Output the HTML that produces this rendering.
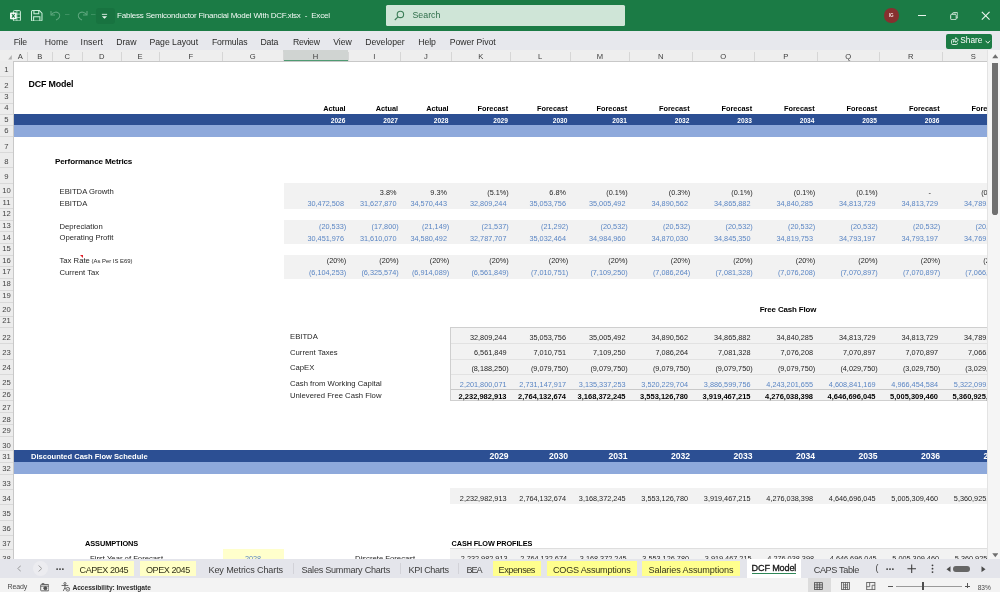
<!DOCTYPE html>
<html lang="en"><head><meta charset="utf-8"><title>Fabless Semiconductor Financial Model With DCF.xlsx - Excel</title>
<style>
html,body{margin:0;padding:0;}
body{width:1000px;height:592px;overflow:hidden;position:relative;background:#fff;font-family:"Liberation Sans",sans-serif;color:#1a1a1a;}
div,span.t,svg.a{position:absolute;}
.t{white-space:nowrap;line-height:1.15;font-size:7.6px;color:#262626;}
.b{font-weight:bold;color:#000;}
.w{color:#fff;}
.blue{color:#5b86c4;}
.ch{font-size:7.6px;color:#3c3c3c;}
.rh{color:#444;}
#titlebar{left:0;top:0;width:1000px;height:30.8px;background:#1b7b45;}
#ribbon{left:0;top:30.8px;width:1000px;height:19.4px;background:#e7e8ed;}
#ribbon .t{font-size:8.7px;color:#2b2b2b;top:6.4px;}
#tabs{left:0;top:558.8px;width:1000px;height:19.4px;background:#e4e5eb;}
#tabs .tab{top:2px;height:14.8px;}
#status{left:0;top:578.2px;width:1000px;height:13.8px;background:#f3f3f3;}
#status .t{font-size:7.2px;color:#4a4a4a;top:5.3px;}
</style></head><body>
<div id="aa" style="left:0;top:0;width:1000px;height:592px;will-change:transform;">
<div id="titlebar">
<!-- excel logo -->
<svg class="a" style="left:9.8px;top:9.6px" width="11" height="11.6" viewBox="0 0 11 11.6"><rect x="3.4" y="0.6" width="7" height="10.4" rx="1" fill="none" stroke="#d4f0df" stroke-width="1"/><path d="M6.9 0.6 V11 M3.4 4.1 H10.4 M3.4 7.5 H10.4" stroke="#bfe6cf" stroke-width="0.8" fill="none"/><rect x="0" y="2.6" width="6.6" height="6.6" rx="0.9" fill="#f4fbf6"/><path d="M1.9 4.2 L4.7 7.6 M4.7 4.2 L1.9 7.6" stroke="#1b7b45" stroke-width="1.05"/></svg>
<!-- save -->
<svg class="a" style="left:31px;top:9.5px" width="11.5" height="11.5" viewBox="0 0 11 11" fill="none" stroke="#c9efd9" stroke-width="1"><path d="M1.5 0.5 H8 L10.5 3 V9.5 a1 1 0 0 1 -1 1 H1.5 a1 1 0 0 1 -1 -1 V1.5 a1 1 0 0 1 1 -1 Z"/><path d="M2.8 0.5 V3.6 H7.4 V0.5"/><path d="M2.5 10.5 V6.5 H8.5 V10.5"/></svg>
<!-- undo -->
<svg class="a" style="left:50px;top:10px" width="12" height="11" viewBox="0 0 12 11" fill="none" stroke="#5fa77f" stroke-width="1.1"><path d="M1 1 V5 H5"/><path d="M1.3 4.8 C3 2 7 1.2 9 3.5 C11 6 9 9 6 10"/></svg>
<span class="t" style="left:65px;top:9px;font-size:8px;color:#5fa77f;">&#8211;</span>
<!-- redo -->
<svg class="a" style="left:76px;top:10px" width="12" height="11" viewBox="0 0 12 11" fill="none" stroke="#5fa77f" stroke-width="1.1"><path d="M11 1 V5 H7"/><path d="M10.7 4.8 C9 2 5 1.2 3 3.5 C1 6 3 9 6 10"/></svg>
<span class="t" style="left:91px;top:9px;font-size:8px;color:#5fa77f;">&#8211;</span>
<!-- customize qat -->
<div style="left:96px;top:8px;width:19px;height:16px;border-radius:3px;background:#187340;"></div>
<svg class="a" style="left:100.5px;top:13px" width="7" height="7" viewBox="0 0 8 8"><rect x="1" y="1" width="6" height="1" fill="#eaf5ee"/><polygon points="1,3.6 7,3.6 4,6.6" fill="#eaf5ee"/></svg>
<span class="t" style="left:117px;top:11.2px;font-size:8px;letter-spacing:-0.2px;color:#f4faf6;">Fabless Semiconductor Financial Model With DCF.xlsx &nbsp;-&nbsp; Excel</span>
<!-- search -->
<div style="left:386px;top:5px;width:239px;height:20.5px;background:#cfe5d7;border-radius:1.5px;"></div>
<svg class="a" style="left:394px;top:9.5px" width="11" height="11" viewBox="0 0 11 11" fill="none" stroke="#3c7d57" stroke-width="1.1"><circle cx="6.4" cy="4.4" r="3.2"/><path d="M4 6.8 L0.8 10"/></svg>
<span class="t" style="left:412.5px;top:9.9px;font-size:8.8px;color:#2f6e4a;">Search</span>
<!-- avatar -->
<div style="left:884px;top:8.3px;width:14.5px;height:14.5px;border-radius:50%;background:#86302f;"></div>
<span class="t" style="left:884px;width:14.5px;text-align:center;top:12.8px;font-size:4.6px;color:#f6dada;font-weight:bold;">IG</span>
<!-- window controls -->
<div style="left:918.3px;top:14.6px;width:8px;height:1.2px;background:#e9f4ed;"></div>
<svg class="a" style="left:949.5px;top:11.6px" width="8.6" height="8.6" viewBox="0 0 10 10" fill="none" stroke="#e9f4ed" stroke-width="1.1"><rect x="0.8" y="2.6" width="6.4" height="6.4" rx="1.2"/><path d="M3 2.3 V1.8 a1 1 0 0 1 1 -1 H8.2 a1 1 0 0 1 1 1 V6 a1 1 0 0 1 -1 1 H7.6"/></svg>
<svg class="a" style="left:980.5px;top:10.7px" width="9.4" height="9.4" viewBox="0 0 9 9" fill="none" stroke="#e9f4ed" stroke-width="1.1"><path d="M0.8 0.8 L8.2 8.2 M8.2 0.8 L0.8 8.2"/></svg>
</div>
<div id="ribbon">
<span class="t" style="left:13.8px;letter-spacing:-0.254px;">File</span>
<span class="t" style="left:44.7px;letter-spacing:0.049px;">Home</span>
<span class="t" style="left:80.6px;letter-spacing:0.140px;">Insert</span>
<span class="t" style="left:116.2px;letter-spacing:-0.001px;">Draw</span>
<span class="t" style="left:149.5px;letter-spacing:-0.024px;">Page Layout</span>
<span class="t" style="left:211.9px;letter-spacing:-0.083px;">Formulas</span>
<span class="t" style="left:260.4px;letter-spacing:-0.169px;">Data</span>
<span class="t" style="left:292.9px;letter-spacing:-0.288px;">Review</span>
<span class="t" style="left:333.2px;letter-spacing:-0.001px;">View</span>
<span class="t" style="left:365.2px;letter-spacing:-0.017px;">Developer</span>
<span class="t" style="left:418.2px;letter-spacing:-0.049px;">Help</span>
<span class="t" style="left:449.7px;letter-spacing:-0.038px;">Power Pivot</span>
<div style="left:946.4px;top:2.8px;width:46px;height:15px;background:#1b7b45;border-radius:2px;"></div>
<svg class="a" style="left:950.8px;top:6.4px" width="8" height="8" viewBox="0 0 8 8" fill="none" stroke="#e9f4ed" stroke-width="0.9"><path d="M3 2.6 H1.6 a1 1 0 0 0 -1 1 V6.5 a1 1 0 0 0 1 1 H5.4 a1 1 0 0 0 1 -1 V5.8"/><path d="M4.7 0.6 L7.4 3 L4.7 5.4 V4 C3.6 4 2.9 4.4 2.4 5.2 C2.5 3.4 3.4 2.2 4.7 2 Z"/></svg>
<span class="t" style="left:960.3px;top:5.6px;font-size:8.3px;color:#fff;">Share</span>
<svg class="a" style="left:985.4px;top:8.8px" width="5.6" height="4.4" viewBox="0 0 5 4" fill="none" stroke="#e9f4ed" stroke-width="0.9"><path d="M0.5 0.7 L2.5 2.9 L4.5 0.7"/></svg>
</div>
<div id="sheet" style="left:0;top:50px;width:987px;height:509px;overflow:hidden;background:#fff;">
<div id="sheetin" style="left:0;top:-50px;width:1000px;height:700px;">
<div style="left:0px;top:50px;width:987px;height:10.8px;background:#eeeeee;border-bottom:0.8px solid #c8c8c8;"></div>
<div style="left:283px;top:50px;width:65px;height:10px;background:#d0d4d2;border-bottom:1.3px solid #4f9a72;"></div>
<span class="t ch" style="left:10.2px;width:20px;top:52.8px;text-align:center;">A</span>
<div style="left:27.0px;top:51.5px;width:1px;height:9.5px;background:#d6d6d6;"></div>
<span class="t ch" style="left:29.8px;width:20px;top:52.8px;text-align:center;">B</span>
<div style="left:51.5px;top:51.5px;width:1px;height:9.5px;background:#d6d6d6;"></div>
<span class="t ch" style="left:57.2px;width:20px;top:52.8px;text-align:center;">C</span>
<div style="left:82.0px;top:51.5px;width:1px;height:9.5px;background:#d6d6d6;"></div>
<span class="t ch" style="left:91.8px;width:20px;top:52.8px;text-align:center;">D</span>
<div style="left:120.5px;top:51.5px;width:1px;height:9.5px;background:#d6d6d6;"></div>
<span class="t ch" style="left:130.0px;width:20px;top:52.8px;text-align:center;">E</span>
<div style="left:158.5px;top:51.5px;width:1px;height:9.5px;background:#d6d6d6;"></div>
<span class="t ch" style="left:180.8px;width:20px;top:52.8px;text-align:center;">F</span>
<div style="left:222.0px;top:51.5px;width:1px;height:9.5px;background:#d6d6d6;"></div>
<span class="t ch" style="left:242.8px;width:20px;top:52.8px;text-align:center;">G</span>
<div style="left:282.5px;top:51.5px;width:1px;height:9.5px;background:#d6d6d6;"></div>
<span class="t ch" style="left:305.5px;width:20px;top:52.8px;text-align:center;">H</span>
<div style="left:347.5px;top:51.5px;width:1px;height:9.5px;background:#d6d6d6;"></div>
<span class="t ch" style="left:364.2px;width:20px;top:52.8px;text-align:center;">I</span>
<div style="left:400.0px;top:51.5px;width:1px;height:9.5px;background:#d6d6d6;"></div>
<span class="t ch" style="left:415.8px;width:20px;top:52.8px;text-align:center;">J</span>
<div style="left:450.5px;top:51.5px;width:1px;height:9.5px;background:#d6d6d6;"></div>
<span class="t ch" style="left:470.8px;width:20px;top:52.8px;text-align:center;">K</span>
<div style="left:510.0px;top:51.5px;width:1px;height:9.5px;background:#d6d6d6;"></div>
<span class="t ch" style="left:530.2px;width:20px;top:52.8px;text-align:center;">L</span>
<div style="left:569.5px;top:51.5px;width:1px;height:9.5px;background:#d6d6d6;"></div>
<span class="t ch" style="left:589.8px;width:20px;top:52.8px;text-align:center;">M</span>
<div style="left:629.0px;top:51.5px;width:1px;height:9.5px;background:#d6d6d6;"></div>
<span class="t ch" style="left:650.8px;width:20px;top:52.8px;text-align:center;">N</span>
<div style="left:691.5px;top:51.5px;width:1px;height:9.5px;background:#d6d6d6;"></div>
<span class="t ch" style="left:713.2px;width:20px;top:52.8px;text-align:center;">O</span>
<div style="left:754.0px;top:51.5px;width:1px;height:9.5px;background:#d6d6d6;"></div>
<span class="t ch" style="left:775.8px;width:20px;top:52.8px;text-align:center;">P</span>
<div style="left:816.5px;top:51.5px;width:1px;height:9.5px;background:#d6d6d6;"></div>
<span class="t ch" style="left:838.2px;width:20px;top:52.8px;text-align:center;">Q</span>
<div style="left:879.0px;top:51.5px;width:1px;height:9.5px;background:#d6d6d6;"></div>
<span class="t ch" style="left:900.8px;width:20px;top:52.8px;text-align:center;">R</span>
<div style="left:941.5px;top:51.5px;width:1px;height:9.5px;background:#d6d6d6;"></div>
<span class="t ch" style="left:963.2px;width:20px;top:52.8px;text-align:center;">S</span>
<div style="left:0px;top:61.4px;width:12.7px;height:500px;background:#ececec;border-right:0.8px solid #c8c8c8;"></div>
<div style="left:0px;top:50px;width:13px;height:10.8px;background:#eeeeee;"></div>
<svg style="position:absolute;left:7.5px;top:54.8px" width="4" height="5"><polygon points="3.8,0 3.8,4.6 0.2,4.6" fill="#b0b0b0"/></svg>
<span class="t rh" style="left:0;width:13px;top:66.2px;font-size:7.7px;text-align:center;">1</span>
<div style="left:0px;top:75.5px;width:13px;height:1px;background:#d9d9d9;"></div>
<span class="t rh" style="left:0;width:13px;top:82.2px;font-size:7.7px;text-align:center;">2</span>
<div style="left:0px;top:91.5px;width:13px;height:1px;background:#d9d9d9;"></div>
<span class="t rh" style="left:0;width:13px;top:93.2px;font-size:7.7px;text-align:center;">3</span>
<div style="left:0px;top:102.5px;width:13px;height:1px;background:#d9d9d9;"></div>
<span class="t rh" style="left:0;width:13px;top:104.4px;font-size:7.7px;text-align:center;">4</span>
<div style="left:0px;top:113.7px;width:13px;height:1px;background:#d9d9d9;"></div>
<span class="t rh" style="left:0;width:13px;top:115.6px;font-size:7.7px;text-align:center;">5</span>
<div style="left:0px;top:124.9px;width:13px;height:1px;background:#d9d9d9;"></div>
<span class="t rh" style="left:0;width:13px;top:127.0px;font-size:7.7px;text-align:center;">6</span>
<div style="left:0px;top:136.3px;width:13px;height:1px;background:#d9d9d9;"></div>
<span class="t rh" style="left:0;width:13px;top:142.7px;font-size:7.7px;text-align:center;">7</span>
<div style="left:0px;top:152.0px;width:13px;height:1px;background:#d9d9d9;"></div>
<span class="t rh" style="left:0;width:13px;top:157.7px;font-size:7.7px;text-align:center;">8</span>
<div style="left:0px;top:167.0px;width:13px;height:1px;background:#d9d9d9;"></div>
<span class="t rh" style="left:0;width:13px;top:173.2px;font-size:7.7px;text-align:center;">9</span>
<div style="left:0px;top:182.5px;width:13px;height:1px;background:#d9d9d9;"></div>
<span class="t rh" style="left:0;width:13px;top:187.2px;font-size:7.7px;text-align:center;">10</span>
<div style="left:0px;top:196.5px;width:13px;height:1px;background:#d9d9d9;"></div>
<span class="t rh" style="left:0;width:13px;top:198.7px;font-size:7.7px;text-align:center;">11</span>
<div style="left:0px;top:208.0px;width:13px;height:1px;background:#d9d9d9;"></div>
<span class="t rh" style="left:0;width:13px;top:210.2px;font-size:7.7px;text-align:center;">12</span>
<div style="left:0px;top:219.5px;width:13px;height:1px;background:#d9d9d9;"></div>
<span class="t rh" style="left:0;width:13px;top:221.7px;font-size:7.7px;text-align:center;">13</span>
<div style="left:0px;top:231.0px;width:13px;height:1px;background:#d9d9d9;"></div>
<span class="t rh" style="left:0;width:13px;top:233.7px;font-size:7.7px;text-align:center;">14</span>
<div style="left:0px;top:243.0px;width:13px;height:1px;background:#d9d9d9;"></div>
<span class="t rh" style="left:0;width:13px;top:245.2px;font-size:7.7px;text-align:center;">15</span>
<div style="left:0px;top:254.5px;width:13px;height:1px;background:#d9d9d9;"></div>
<span class="t rh" style="left:0;width:13px;top:256.7px;font-size:7.7px;text-align:center;">16</span>
<div style="left:0px;top:266.0px;width:13px;height:1px;background:#d9d9d9;"></div>
<span class="t rh" style="left:0;width:13px;top:268.2px;font-size:7.7px;text-align:center;">17</span>
<div style="left:0px;top:277.5px;width:13px;height:1px;background:#d9d9d9;"></div>
<span class="t rh" style="left:0;width:13px;top:280.2px;font-size:7.7px;text-align:center;">18</span>
<div style="left:0px;top:289.5px;width:13px;height:1px;background:#d9d9d9;"></div>
<span class="t rh" style="left:0;width:13px;top:292.2px;font-size:7.7px;text-align:center;">19</span>
<div style="left:0px;top:301.5px;width:13px;height:1px;background:#d9d9d9;"></div>
<span class="t rh" style="left:0;width:13px;top:306.2px;font-size:7.7px;text-align:center;">20</span>
<div style="left:0px;top:315.5px;width:13px;height:1px;background:#d9d9d9;"></div>
<span class="t rh" style="left:0;width:13px;top:317.4px;font-size:7.7px;text-align:center;">21</span>
<div style="left:0px;top:326.7px;width:13px;height:1px;background:#d9d9d9;"></div>
<span class="t rh" style="left:0;width:13px;top:333.8px;font-size:7.7px;text-align:center;">22</span>
<div style="left:0px;top:343.1px;width:13px;height:1px;background:#d9d9d9;"></div>
<span class="t rh" style="left:0;width:13px;top:349.2px;font-size:7.7px;text-align:center;">23</span>
<div style="left:0px;top:358.5px;width:13px;height:1px;background:#d9d9d9;"></div>
<span class="t rh" style="left:0;width:13px;top:364.2px;font-size:7.7px;text-align:center;">24</span>
<div style="left:0px;top:373.5px;width:13px;height:1px;background:#d9d9d9;"></div>
<span class="t rh" style="left:0;width:13px;top:379.2px;font-size:7.7px;text-align:center;">25</span>
<div style="left:0px;top:388.5px;width:13px;height:1px;background:#d9d9d9;"></div>
<span class="t rh" style="left:0;width:13px;top:390.8px;font-size:7.7px;text-align:center;">26</span>
<div style="left:0px;top:400.1px;width:13px;height:1px;background:#d9d9d9;"></div>
<span class="t rh" style="left:0;width:13px;top:404.0px;font-size:7.7px;text-align:center;">27</span>
<div style="left:0px;top:411.5px;width:13px;height:1px;background:#d9d9d9;"></div>
<span class="t rh" style="left:0;width:13px;top:415.7px;font-size:7.7px;text-align:center;">28</span>
<div style="left:0px;top:423.5px;width:13px;height:1px;background:#d9d9d9;"></div>
<span class="t rh" style="left:0;width:13px;top:427.4px;font-size:7.7px;text-align:center;">29</span>
<div style="left:0px;top:435.5px;width:13px;height:1px;background:#d9d9d9;"></div>
<span class="t rh" style="left:0;width:13px;top:442.0px;font-size:7.7px;text-align:center;">30</span>
<div style="left:0px;top:449.5px;width:13px;height:1px;background:#d9d9d9;"></div>
<span class="t rh" style="left:0;width:13px;top:453.2px;font-size:7.7px;text-align:center;">31</span>
<div style="left:0px;top:461.5px;width:13px;height:1px;background:#d9d9d9;"></div>
<span class="t rh" style="left:0;width:13px;top:464.7px;font-size:7.7px;text-align:center;">32</span>
<div style="left:0px;top:473.5px;width:13px;height:1px;background:#d9d9d9;"></div>
<span class="t rh" style="left:0;width:13px;top:480.2px;font-size:7.7px;text-align:center;">33</span>
<div style="left:0px;top:488.5px;width:13px;height:1px;background:#d9d9d9;"></div>
<span class="t rh" style="left:0;width:13px;top:495.2px;font-size:7.7px;text-align:center;">34</span>
<div style="left:0px;top:503.5px;width:13px;height:1px;background:#d9d9d9;"></div>
<span class="t rh" style="left:0;width:13px;top:510.2px;font-size:7.7px;text-align:center;">35</span>
<div style="left:0px;top:519.5px;width:13px;height:1px;background:#d9d9d9;"></div>
<span class="t rh" style="left:0;width:13px;top:524.7px;font-size:7.7px;text-align:center;">36</span>
<div style="left:0px;top:535.0px;width:13px;height:1px;background:#d9d9d9;"></div>
<span class="t rh" style="left:0;width:13px;top:539.8px;font-size:7.7px;text-align:center;">37</span>
<div style="left:0px;top:549.1px;width:13px;height:1px;background:#d9d9d9;"></div>
<span class="t rh" style="left:0;width:13px;top:555.2px;font-size:7.7px;text-align:center;">38</span>
<div style="left:0px;top:564.5px;width:13px;height:1px;background:#d9d9d9;"></div>
<div style="left:13.5px;top:114.2px;width:1000px;height:11.200000000000003px;background:#2c4f93;"></div>
<div style="left:13.5px;top:125.4px;width:1000px;height:11.400000000000006px;background:#8ea9db;"></div>
<div style="left:13.5px;top:450px;width:1000px;height:12px;background:#2c4f93;"></div>
<div style="left:13.5px;top:462px;width:1000px;height:12px;background:#8ea9db;"></div>
<div style="left:283.5px;top:183px;width:800px;height:25.8px;background:#f2f2f2;"></div>
<div style="left:283.5px;top:220px;width:800px;height:23.5px;background:#f2f2f2;"></div>
<div style="left:283.5px;top:255px;width:800px;height:24.2px;background:#f2f2f2;"></div>
<div style="left:449.8px;top:488.2px;width:800px;height:15.8px;background:#f2f2f2;"></div>
<div style="left:449.8px;top:548.2px;width:800px;height:20px;background:#f2f2f2;border-top:1px solid #dedede;"></div>
<div style="left:450px;top:326.8px;width:800px;height:74.30000000000004px;background:#f2f2f2;border:1px solid #cfcfcf;box-sizing:border-box;"></div>
<div style="left:451px;top:343.1px;width:800px;height:1px;background:#e2e2e2;"></div>
<div style="left:451px;top:358.5px;width:800px;height:1px;background:#e2e2e2;"></div>
<div style="left:451px;top:373.5px;width:800px;height:1px;background:#e2e2e2;"></div>
<div style="left:451px;top:388.5px;width:800px;height:1px;background:#c9c9c9;"></div>
<div style="left:222.5px;top:549px;width:61px;height:12px;background:#ffffcc;"></div>
<span class="t b" style="left:28.6px;top:79.3px;font-size:8.9px;letter-spacing:-0.18px;">DCF Model</span>
<span class="t b" style="left:55px;top:156.9px;font-size:8.1px;letter-spacing:-0.15px;">Performance Metrics</span>
<span class="t b" style="right:654.4px;top:105.4px;font-size:7.35px;">Actual</span>
<span class="t b" style="right:601.9px;top:105.4px;font-size:7.35px;">Actual</span>
<span class="t b" style="right:551.4px;top:105.4px;font-size:7.35px;">Actual</span>
<span class="t b" style="right:491.9px;top:105.4px;font-size:7.35px;">Forecast</span>
<span class="t b" style="right:432.4px;top:105.4px;font-size:7.35px;">Forecast</span>
<span class="t b" style="right:372.9px;top:105.4px;font-size:7.35px;">Forecast</span>
<span class="t b" style="right:310.4px;top:105.4px;font-size:7.35px;">Forecast</span>
<span class="t b" style="right:247.9px;top:105.4px;font-size:7.35px;">Forecast</span>
<span class="t b" style="right:185.4px;top:105.4px;font-size:7.35px;">Forecast</span>
<span class="t b" style="right:122.9px;top:105.4px;font-size:7.35px;">Forecast</span>
<span class="t b" style="right:60.4px;top:105.4px;font-size:7.35px;">Forecast</span>
<span class="t b" style="right:-2.1px;top:105.4px;font-size:7.35px;">Forecast</span>
<span class="t b w" style="right:654.6px;top:117.5px;font-size:6.6px;top:117.1px;">2026</span>
<span class="t b w" style="right:602.1px;top:117.5px;font-size:6.6px;top:117.1px;">2027</span>
<span class="t b w" style="right:551.6px;top:117.5px;font-size:6.6px;top:117.1px;">2028</span>
<span class="t b w" style="right:492.1px;top:117.5px;font-size:6.6px;top:117.1px;">2029</span>
<span class="t b w" style="right:432.6px;top:117.5px;font-size:6.6px;top:117.1px;">2030</span>
<span class="t b w" style="right:373.1px;top:117.5px;font-size:6.6px;top:117.1px;">2031</span>
<span class="t b w" style="right:310.6px;top:117.5px;font-size:6.6px;top:117.1px;">2032</span>
<span class="t b w" style="right:248.1px;top:117.5px;font-size:6.6px;top:117.1px;">2033</span>
<span class="t b w" style="right:185.6px;top:117.5px;font-size:6.6px;top:117.1px;">2034</span>
<span class="t b w" style="right:123.1px;top:117.5px;font-size:6.6px;top:117.1px;">2035</span>
<span class="t b w" style="right:60.6px;top:117.5px;font-size:6.6px;top:117.1px;">2036</span>
<span class="t b w" style="right:-1.9px;top:117.5px;font-size:6.6px;top:117.1px;">2037</span>
<span class="t " style="left:59.5px;top:188.1px;font-size:7.7px;">EBITDA Growth</span>
<span class="t " style="right:603.5px;top:188.6px;font-size:7.3px;">3.8%</span>
<span class="t " style="right:553.0px;top:188.6px;font-size:7.3px;">9.3%</span>
<span class="t " style="right:491.3px;top:188.6px;font-size:7.3px;">(5.1%)</span>
<span class="t " style="right:434.0px;top:188.6px;font-size:7.3px;">6.8%</span>
<span class="t " style="right:372.3px;top:188.6px;font-size:7.3px;">(0.1%)</span>
<span class="t " style="right:309.8px;top:188.6px;font-size:7.3px;">(0.3%)</span>
<span class="t " style="right:247.3px;top:188.6px;font-size:7.3px;">(0.1%)</span>
<span class="t " style="right:184.8px;top:188.6px;font-size:7.3px;">(0.1%)</span>
<span class="t " style="right:122.3px;top:188.6px;font-size:7.3px;">(0.1%)</span>
<span class="t " style="right:69.0px;top:188.6px;font-size:7.3px;">-</span>
<span class="t " style="right:-2.7px;top:188.6px;font-size:7.3px;">(0.1%)</span>
<span class="t " style="left:59.5px;top:199.7px;font-size:7.7px;">EBITDA</span>
<span class="t blue" style="right:656.0px;top:200.2px;font-size:7.3px;">30,472,508</span>
<span class="t blue" style="right:603.5px;top:200.2px;font-size:7.3px;">31,627,870</span>
<span class="t blue" style="right:553.0px;top:200.2px;font-size:7.3px;">34,570,443</span>
<span class="t blue" style="right:493.5px;top:200.2px;font-size:7.3px;">32,809,244</span>
<span class="t blue" style="right:434.0px;top:200.2px;font-size:7.3px;">35,053,756</span>
<span class="t blue" style="right:374.5px;top:200.2px;font-size:7.3px;">35,005,492</span>
<span class="t blue" style="right:312.0px;top:200.2px;font-size:7.3px;">34,890,562</span>
<span class="t blue" style="right:249.5px;top:200.2px;font-size:7.3px;">34,865,882</span>
<span class="t blue" style="right:187.0px;top:200.2px;font-size:7.3px;">34,840,285</span>
<span class="t blue" style="right:124.5px;top:200.2px;font-size:7.3px;">34,813,729</span>
<span class="t blue" style="right:62.0px;top:200.2px;font-size:7.3px;">34,813,729</span>
<span class="t blue" style="right:-0.5px;top:200.2px;font-size:7.3px;">34,789,842</span>
<span class="t " style="left:59.5px;top:222.7px;font-size:7.7px;">Depreciation</span>
<span class="t blue" style="right:653.8px;top:223.2px;font-size:7.3px;">(20,533)</span>
<span class="t blue" style="right:601.3px;top:223.2px;font-size:7.3px;">(17,800)</span>
<span class="t blue" style="right:550.8px;top:223.2px;font-size:7.3px;">(21,149)</span>
<span class="t blue" style="right:491.3px;top:223.2px;font-size:7.3px;">(21,537)</span>
<span class="t blue" style="right:431.8px;top:223.2px;font-size:7.3px;">(21,292)</span>
<span class="t blue" style="right:372.3px;top:223.2px;font-size:7.3px;">(20,532)</span>
<span class="t blue" style="right:309.8px;top:223.2px;font-size:7.3px;">(20,532)</span>
<span class="t blue" style="right:247.3px;top:223.2px;font-size:7.3px;">(20,532)</span>
<span class="t blue" style="right:184.8px;top:223.2px;font-size:7.3px;">(20,532)</span>
<span class="t blue" style="right:122.3px;top:223.2px;font-size:7.3px;">(20,532)</span>
<span class="t blue" style="right:59.8px;top:223.2px;font-size:7.3px;">(20,532)</span>
<span class="t blue" style="right:-2.7px;top:223.2px;font-size:7.3px;">(20,532)</span>
<span class="t " style="left:59.5px;top:234.0px;font-size:7.7px;">Operating Profit</span>
<span class="t blue" style="right:656.0px;top:234.5px;font-size:7.3px;">30,451,976</span>
<span class="t blue" style="right:603.5px;top:234.5px;font-size:7.3px;">31,610,070</span>
<span class="t blue" style="right:553.0px;top:234.5px;font-size:7.3px;">34,580,492</span>
<span class="t blue" style="right:493.5px;top:234.5px;font-size:7.3px;">32,787,707</span>
<span class="t blue" style="right:434.0px;top:234.5px;font-size:7.3px;">35,032,464</span>
<span class="t blue" style="right:374.5px;top:234.5px;font-size:7.3px;">34,984,960</span>
<span class="t blue" style="right:312.0px;top:234.5px;font-size:7.3px;">34,870,030</span>
<span class="t blue" style="right:249.5px;top:234.5px;font-size:7.3px;">34,845,350</span>
<span class="t blue" style="right:187.0px;top:234.5px;font-size:7.3px;">34,819,753</span>
<span class="t blue" style="right:124.5px;top:234.5px;font-size:7.3px;">34,793,197</span>
<span class="t blue" style="right:62.0px;top:234.5px;font-size:7.3px;">34,793,197</span>
<span class="t blue" style="right:-0.5px;top:234.5px;font-size:7.3px;">34,769,310</span>
<span class="t " style="right:653.8px;top:257.3px;font-size:7.3px;">(20%)</span>
<span class="t " style="right:601.3px;top:257.3px;font-size:7.3px;">(20%)</span>
<span class="t " style="right:550.8px;top:257.3px;font-size:7.3px;">(20%)</span>
<span class="t " style="right:491.3px;top:257.3px;font-size:7.3px;">(20%)</span>
<span class="t " style="right:431.8px;top:257.3px;font-size:7.3px;">(20%)</span>
<span class="t " style="right:372.3px;top:257.3px;font-size:7.3px;">(20%)</span>
<span class="t " style="right:309.8px;top:257.3px;font-size:7.3px;">(20%)</span>
<span class="t " style="right:247.3px;top:257.3px;font-size:7.3px;">(20%)</span>
<span class="t " style="right:184.8px;top:257.3px;font-size:7.3px;">(20%)</span>
<span class="t " style="right:122.3px;top:257.3px;font-size:7.3px;">(20%)</span>
<span class="t " style="right:59.8px;top:257.3px;font-size:7.3px;">(20%)</span>
<span class="t " style="right:-2.7px;top:257.3px;font-size:7.3px;">(20%)</span>
<span class="t " style="left:59.5px;top:256.8px;font-size:7.7px;">Tax Rate</span>
<span class="t " style="left:91.5px;top:258.9px;font-size:5.9px;margin-top:-0.8px;">(As Per IS E69)</span>
<svg style="position:absolute;left:80px;top:255px" width="3.2" height="3.2"><polygon points="0,0 3.2,0 3.2,3.2" fill="#e0202a"/></svg>
<span class="t " style="left:59.5px;top:268.6px;font-size:7.7px;">Current Tax</span>
<span class="t blue" style="right:653.8px;top:269.1px;font-size:7.3px;">(6,104,253)</span>
<span class="t blue" style="right:601.3px;top:269.1px;font-size:7.3px;">(6,325,574)</span>
<span class="t blue" style="right:550.8px;top:269.1px;font-size:7.3px;">(6,914,089)</span>
<span class="t blue" style="right:491.3px;top:269.1px;font-size:7.3px;">(6,561,849)</span>
<span class="t blue" style="right:431.8px;top:269.1px;font-size:7.3px;">(7,010,751)</span>
<span class="t blue" style="right:372.3px;top:269.1px;font-size:7.3px;">(7,109,250)</span>
<span class="t blue" style="right:309.8px;top:269.1px;font-size:7.3px;">(7,086,264)</span>
<span class="t blue" style="right:247.3px;top:269.1px;font-size:7.3px;">(7,081,328)</span>
<span class="t blue" style="right:184.8px;top:269.1px;font-size:7.3px;">(7,076,208)</span>
<span class="t blue" style="right:122.3px;top:269.1px;font-size:7.3px;">(7,070,897)</span>
<span class="t blue" style="right:59.8px;top:269.1px;font-size:7.3px;">(7,070,897)</span>
<span class="t blue" style="right:-2.7px;top:269.1px;font-size:7.3px;">(7,066,120)</span>
<span class="t b" style="left:738px;width:100px;text-align:center;top:304.7px;font-size:7.9px;letter-spacing:-0.12px;">Free Cash Flow</span>
<span class="t " style="left:290px;top:333.0px;font-size:7.7px;">EBITDA</span>
<span class="t " style="right:493.5px;top:333.5px;font-size:7.3px;">32,809,244</span>
<span class="t " style="right:434.0px;top:333.5px;font-size:7.3px;">35,053,756</span>
<span class="t " style="right:374.5px;top:333.5px;font-size:7.3px;">35,005,492</span>
<span class="t " style="right:312.0px;top:333.5px;font-size:7.3px;">34,890,562</span>
<span class="t " style="right:249.5px;top:333.5px;font-size:7.3px;">34,865,882</span>
<span class="t " style="right:187.0px;top:333.5px;font-size:7.3px;">34,840,285</span>
<span class="t " style="right:124.5px;top:333.5px;font-size:7.3px;">34,813,729</span>
<span class="t " style="right:62.0px;top:333.5px;font-size:7.3px;">34,813,729</span>
<span class="t " style="right:-0.5px;top:333.5px;font-size:7.3px;">34,789,842</span>
<span class="t " style="left:290px;top:348.8px;font-size:7.7px;">Current Taxes</span>
<span class="t " style="right:493.5px;top:349.3px;font-size:7.3px;">6,561,849</span>
<span class="t " style="right:434.0px;top:349.3px;font-size:7.3px;">7,010,751</span>
<span class="t " style="right:374.5px;top:349.3px;font-size:7.3px;">7,109,250</span>
<span class="t " style="right:312.0px;top:349.3px;font-size:7.3px;">7,086,264</span>
<span class="t " style="right:249.5px;top:349.3px;font-size:7.3px;">7,081,328</span>
<span class="t " style="right:187.0px;top:349.3px;font-size:7.3px;">7,076,208</span>
<span class="t " style="right:124.5px;top:349.3px;font-size:7.3px;">7,070,897</span>
<span class="t " style="right:62.0px;top:349.3px;font-size:7.3px;">7,070,897</span>
<span class="t " style="right:-0.5px;top:349.3px;font-size:7.3px;">7,066,120</span>
<span class="t " style="left:290px;top:364.4px;font-size:7.7px;">CapEX</span>
<span class="t " style="right:491.3px;top:364.9px;font-size:7.3px;">(8,188,250)</span>
<span class="t " style="right:431.8px;top:364.9px;font-size:7.3px;">(9,079,750)</span>
<span class="t " style="right:372.3px;top:364.9px;font-size:7.3px;">(9,079,750)</span>
<span class="t " style="right:309.8px;top:364.9px;font-size:7.3px;">(9,079,750)</span>
<span class="t " style="right:247.3px;top:364.9px;font-size:7.3px;">(9,079,750)</span>
<span class="t " style="right:184.8px;top:364.9px;font-size:7.3px;">(9,079,750)</span>
<span class="t " style="right:122.3px;top:364.9px;font-size:7.3px;">(4,029,750)</span>
<span class="t " style="right:59.8px;top:364.9px;font-size:7.3px;">(3,029,750)</span>
<span class="t " style="right:-2.7px;top:364.9px;font-size:7.3px;">(3,029,750)</span>
<span class="t " style="left:290px;top:380.0px;font-size:7.7px;">Cash from Working Capital</span>
<span class="t blue" style="right:493.5px;top:380.5px;font-size:7.3px;">2,201,800,071</span>
<span class="t blue" style="right:434.0px;top:380.5px;font-size:7.3px;">2,731,147,917</span>
<span class="t blue" style="right:374.5px;top:380.5px;font-size:7.3px;">3,135,337,253</span>
<span class="t blue" style="right:312.0px;top:380.5px;font-size:7.3px;">3,520,229,704</span>
<span class="t blue" style="right:249.5px;top:380.5px;font-size:7.3px;">3,886,599,756</span>
<span class="t blue" style="right:187.0px;top:380.5px;font-size:7.3px;">4,243,201,655</span>
<span class="t blue" style="right:124.5px;top:380.5px;font-size:7.3px;">4,608,841,169</span>
<span class="t blue" style="right:62.0px;top:380.5px;font-size:7.3px;">4,966,454,584</span>
<span class="t blue" style="right:-0.5px;top:380.5px;font-size:7.3px;">5,322,099,412</span>
<span class="t " style="left:290px;top:392.3px;font-size:7.7px;">Unlevered Free Cash Flow</span>
<span class="t b" style="right:493.5px;top:392.6px;font-size:7.5px;">2,232,982,913</span>
<span class="t b" style="right:434.0px;top:392.6px;font-size:7.5px;">2,764,132,674</span>
<span class="t b" style="right:374.5px;top:392.6px;font-size:7.5px;">3,168,372,245</span>
<span class="t b" style="right:312.0px;top:392.6px;font-size:7.5px;">3,553,126,780</span>
<span class="t b" style="right:249.5px;top:392.6px;font-size:7.5px;">3,919,467,215</span>
<span class="t b" style="right:187.0px;top:392.6px;font-size:7.5px;">4,276,038,398</span>
<span class="t b" style="right:124.5px;top:392.6px;font-size:7.5px;">4,646,696,045</span>
<span class="t b" style="right:62.0px;top:392.6px;font-size:7.5px;">5,005,309,460</span>
<span class="t b" style="right:-0.5px;top:392.6px;font-size:7.5px;">5,360,925,305</span>
<span class="t b w" style="left:31px;top:453.0px;font-size:7.55px;">Discounted Cash Flow Schedule</span>
<span class="t b w" style="right:491.5px;top:451.8px;font-size:8.6px;">2029</span>
<span class="t b w" style="right:432.0px;top:451.8px;font-size:8.6px;">2030</span>
<span class="t b w" style="right:372.5px;top:451.8px;font-size:8.6px;">2031</span>
<span class="t b w" style="right:310.0px;top:451.8px;font-size:8.6px;">2032</span>
<span class="t b w" style="right:247.5px;top:451.8px;font-size:8.6px;">2033</span>
<span class="t b w" style="right:185.0px;top:451.8px;font-size:8.6px;">2034</span>
<span class="t b w" style="right:122.5px;top:451.8px;font-size:8.6px;">2035</span>
<span class="t b w" style="right:60.0px;top:451.8px;font-size:8.6px;">2036</span>
<span class="t b w" style="right:-2.5px;top:451.8px;font-size:8.6px;">2037</span>
<span class="t " style="right:493.5px;top:494.6px;font-size:7.3px;">2,232,982,913</span>
<span class="t " style="right:434.0px;top:494.6px;font-size:7.3px;">2,764,132,674</span>
<span class="t " style="right:374.5px;top:494.6px;font-size:7.3px;">3,168,372,245</span>
<span class="t " style="right:312.0px;top:494.6px;font-size:7.3px;">3,553,126,780</span>
<span class="t " style="right:249.5px;top:494.6px;font-size:7.3px;">3,919,467,215</span>
<span class="t " style="right:187.0px;top:494.6px;font-size:7.3px;">4,276,038,398</span>
<span class="t " style="right:124.5px;top:494.6px;font-size:7.3px;">4,646,696,045</span>
<span class="t " style="right:62.0px;top:494.6px;font-size:7.3px;">5,005,309,460</span>
<span class="t " style="right:-0.5px;top:494.6px;font-size:7.3px;">5,360,925,305</span>
<span class="t b" style="left:85px;top:540.1px;font-size:7.4px;letter-spacing:-0.1px;">ASSUMPTIONS</span>
<span class="t b" style="left:451.6px;top:540.2px;font-size:7.3px;letter-spacing:-0.12px;">CASH FLOW PROFILES</span>
<span class="t " style="left:90px;top:555px;font-size:7.7px;">First Year of Forecast</span>
<span class="t " style="left:355px;top:555px;font-size:7.7px;">Discrete Forecast</span>
<span class="t blue" style="left:222.5px;width:61px;text-align:center;top:555px;font-size:7.3px;">2028</span>
<span class="t" style="right:492.5px;top:555px;font-size:7.3px;">2,232,982,913</span>
<span class="t" style="right:433.0px;top:555px;font-size:7.3px;">2,764,132,674</span>
<span class="t" style="right:373.5px;top:555px;font-size:7.3px;">3,168,372,245</span>
<span class="t" style="right:311.0px;top:555px;font-size:7.3px;">3,553,126,780</span>
<span class="t" style="right:248.5px;top:555px;font-size:7.3px;">3,919,467,215</span>
<span class="t" style="right:186.0px;top:555px;font-size:7.3px;">4,276,038,398</span>
<span class="t" style="right:123.5px;top:555px;font-size:7.3px;">4,646,696,045</span>
<span class="t" style="right:61.0px;top:555px;font-size:7.3px;">5,005,309,460</span>
<span class="t" style="right:-1.5px;top:555px;font-size:7.3px;">5,360,925,305</span>
</div></div>
<div id="vs" style="left:987px;top:50px;width:13px;height:509px;background:#f5f5f5;border-left:1px solid #e3e3e3;box-sizing:border-box;">
<svg class="a" style="left:3.7px;top:4px" width="6.6" height="4.6" viewBox="0 0 7 5"><polygon points="3.5,0.3 6.8,4.6 0.2,4.6" fill="#6f6f6f"/></svg>
<div style="left:4px;top:13px;width:5.6px;height:151.5px;background:#707070;border-radius:0 0 2.8px 2.8px;"></div>
<svg class="a" style="left:3.9px;top:503.4px" width="6.6" height="4.6" viewBox="0 0 7 5"><polygon points="3.5,4.7 6.8,0.4 0.2,0.4" fill="#6f6f6f"/></svg>
</div>
<div id="tabs">
<svg class="a" style="left:16.6px;top:6.4px" width="4.6" height="7" viewBox="0 0 5 8" fill="none" stroke="#8b8b8b" stroke-width="1"><path d="M4.3 0.6 L0.9 4 L4.3 7.4"/></svg>
<div style="left:32.5px;top:2.3px;width:15px;height:15px;border-radius:50%;background:#ececf0;"></div>
<svg class="a" style="left:37.8px;top:6.4px" width="4.6" height="7" viewBox="0 0 5 8" fill="none" stroke="#8b8b8b" stroke-width="1"><path d="M0.7 0.6 L4.1 4 L0.7 7.4"/></svg>
<svg class="a" style="left:56.4px;top:9px" width="8" height="2.2" viewBox="0 0 8 2.2" fill="#3a3a3a"><circle cx="1.1" cy="1.1" r="0.95"/><circle cx="4" cy="1.1" r="0.95"/><circle cx="6.9" cy="1.1" r="0.95"/></svg>
<div class="tab" style="left:73.2px;width:61.2px;background:#ffffc6;"><span class="t" style="left:6.4px;top:3.9px;font-size:9.1px;letter-spacing:-0.503px;color:#34341c;">CAPEX 2045</span></div>
<div class="tab" style="left:140px;width:56.0px;background:#ffffc6;"><span class="t" style="left:6.0px;top:3.9px;font-size:9.1px;letter-spacing:-0.473px;color:#34341c;">OPEX 2045</span></div>
<div class="tab" style="left:203px;width:86.0px;"><span class="t" style="left:5.5px;top:3.9px;font-size:9.1px;letter-spacing:-0.131px;color:#3c3c3c;">Key Metrics Charts</span></div>
<div class="tab" style="left:296px;width:100.0px;"><span class="t" style="left:5.5px;top:3.9px;font-size:9.1px;letter-spacing:-0.253px;color:#3c3c3c;">Sales Summary Charts</span></div>
<div class="tab" style="left:402px;width:53.0px;"><span class="t" style="left:6.6px;top:3.9px;font-size:9.1px;letter-spacing:-0.400px;color:#3c3c3c;">KPI Charts</span></div>
<div class="tab" style="left:461px;width:26.0px;"><span class="t" style="left:5.5px;top:3.9px;font-size:9.1px;letter-spacing:-1.036px;color:#3c3c3c;">BEA</span></div>
<div class="tab" style="left:493.4px;width:47.6px;background:#ffff8e;"><span class="t" style="left:5.2px;top:3.9px;font-size:9.1px;letter-spacing:-0.446px;color:#34341c;">Expenses</span></div>
<div class="tab" style="left:546.6px;width:90.2px;background:#ffff8e;"><span class="t" style="left:6.3px;top:3.9px;font-size:9.1px;letter-spacing:-0.201px;color:#34341c;">COGS Assumptions</span></div>
<div class="tab" style="left:642px;width:97.5px;background:#ffff8e;"><span class="t" style="left:6.6px;top:3.9px;font-size:9.1px;letter-spacing:-0.105px;color:#34341c;">Salaries Assumptions</span></div>
<div class="tab" style="left:746.6px;width:54.2px;top:0;height:19.4px;background:#fff;"><span class="t" style="left:5.0px;top:4.1px;font-size:9.1px;letter-spacing:-0.158px;color:#151515;-webkit-text-stroke:0.3px #151515;">DCF Model</span><div style="left:5.0px;width:44.6px;top:14.7px;height:1px;background:#2f8757;"></div></div>
<div class="tab" style="left:807px;width:59.0px;"><span class="t" style="left:6.7px;top:3.9px;font-size:9.1px;letter-spacing:-0.360px;color:#3c3c3c;">CAPS Table</span></div>
<div style="left:292.5px;top:4px;width:0.8px;height:11px;background:#d2d2d8;"></div>
<div style="left:399.5px;top:4px;width:0.8px;height:11px;background:#d2d2d8;"></div>
<div style="left:458px;top:4px;width:0.8px;height:11px;background:#d2d2d8;"></div>
<div style="left:870px;top:0;width:130px;height:19.4px;background:#e4e5eb;"></div>
<span class="t" style="left:875.4px;top:4.2px;font-size:8.7px;color:#3c3c3c;">(</span>
<svg class="a" style="left:886.4px;top:9px" width="8" height="2.2" viewBox="0 0 8 2.2" fill="#3a3a3a"><circle cx="1.1" cy="1.1" r="0.95"/><circle cx="4" cy="1.1" r="0.95"/><circle cx="6.9" cy="1.1" r="0.95"/></svg>
<svg class="a" style="left:907px;top:5.4px" width="9.4" height="9.4" viewBox="0 0 9 9" stroke="#3a3a3a" stroke-width="1"><path d="M4.5 0.4 V8.6 M0.4 4.5 H8.6"/></svg>
<svg class="a" style="left:930.8px;top:5.4px" width="3" height="9.4" viewBox="0 0 3 10" fill="#3a3a3a"><circle cx="1.5" cy="1.4" r="0.95"/><circle cx="1.5" cy="5" r="0.95"/><circle cx="1.5" cy="8.6" r="0.95"/></svg>
<svg class="a" style="left:945.6px;top:7px" width="5" height="6.4" viewBox="0 0 5 7"><polygon points="0.3,3.5 4.7,0.3 4.7,6.7" fill="#4a4a4a"/></svg>
<div style="left:953.4px;top:7.2px;width:16.4px;height:5.8px;border-radius:2.9px;background:#666;"></div>
<svg class="a" style="left:980.8px;top:7px" width="5" height="6.4" viewBox="0 0 5 7"><polygon points="4.7,3.5 0.3,0.3 0.3,6.7" fill="#4a4a4a"/></svg>
</div>
<div id="status">
<span class="t" style="left:7.6px;font-size:7px;letter-spacing:-0.13px;">Ready</span>
<svg class="a" style="left:39.6px;top:5px" width="9.6" height="8.4" viewBox="0 0 10 9" fill="none" stroke="#4e4e4e" stroke-width="0.9"><rect x="0.6" y="1.6" width="8.8" height="6.8" rx="0.8"/><path d="M2.2 1.5 V0.4 H4 V1.5 M0.6 3.4 H9.4"/><circle cx="5.6" cy="5.6" r="1.7" fill="#4e4e4e"/></svg>
<svg class="a" style="left:60.6px;top:4.2px" width="9.4" height="9.6" viewBox="0 0 10 10" fill="none" stroke="#4e4e4e" stroke-width="0.9"><circle cx="4.2" cy="1.5" r="1.1"/><path d="M0.6 3.6 H7.8 M4.2 3.6 V6 M4.2 6 L2.4 9.4 M4.2 6 L5 7.2"/><circle cx="7.3" cy="7.6" r="2" fill="#f3f3f3" stroke-width="0.8"/><path d="M6.4 7.6 L7.1 8.3 L8.3 6.9" stroke-width="0.7"/></svg>
<span class="t" style="left:72.4px;font-weight:bold;color:#2e2e2e;font-size:6.7px;letter-spacing:-0.055px;top:5.6px;">Accessibility: Investigate</span>
<div style="left:808px;top:0;width:23px;height:13.6px;background:#dcdcdc;"></div>
<svg class="a" style="left:814.4px;top:3.6px" width="8.8" height="8.2" viewBox="0 0 9 8" fill="none" stroke="#444" stroke-width="0.8"><rect x="0.5" y="0.5" width="8" height="7"/><path d="M0.5 2.8 H8.5 M0.5 5.2 H8.5 M3.2 0.5 V7.5 M5.8 0.5 V7.5"/></svg>
<svg class="a" style="left:840.8px;top:3.6px" width="9" height="8.2" viewBox="0 0 9 8" fill="none" stroke="#555" stroke-width="0.8"><rect x="0.5" y="0.5" width="8" height="7"/><path d="M2.4 0.5 V7.5 M6.6 0.5 V7.5 M4.5 0.5 V7.5 M2.4 2.8 H6.6 M2.4 5.2 H6.6"/></svg>
<svg class="a" style="left:866.2px;top:3.6px" width="9.6" height="8.2" viewBox="0 0 9 8" fill="none" stroke="#555" stroke-width="0.8"><rect x="0.5" y="0.5" width="8" height="7"/><path d="M0.5 4.6 H3.4 V0.5 M5.8 7.5 V3.2 H8.5"/></svg>
<div style="left:888px;top:7.4px;width:5px;height:0.9px;background:#555;"></div>
<div style="left:896.4px;top:7.5px;width:65.6px;height:0.8px;background:#9a9a9a;"></div>
<div style="left:921.8px;top:3.6px;width:2.4px;height:8.4px;background:#4e4e4e;"></div>
<div style="left:964.6px;top:7.4px;width:5px;height:0.9px;background:#555;"></div>
<div style="left:966.65px;top:5.3px;width:0.9px;height:5px;background:#555;"></div>
<span class="t" style="left:977.8px;font-size:6.6px;letter-spacing:-0.1px;top:5.6px;">83%</span>
</div>
</div>
</body></html>
